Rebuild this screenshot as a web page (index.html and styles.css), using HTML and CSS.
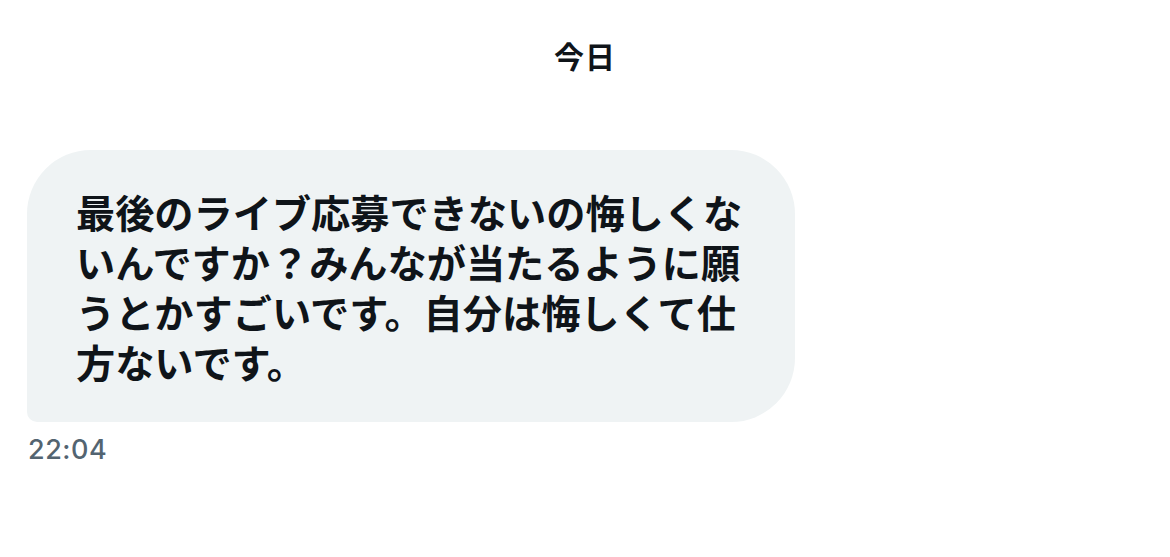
FILE: index.html
```html
<!DOCTYPE html>
<html lang="ja">
<head>
<meta charset="utf-8">
<link rel="stylesheet" href="styles.css">
</head>
<body>
<main class="chat">
  <div class="date">今日</div>
  <div class="message">
    <div class="bubble">最後のライブ応募できないの悔しくないんですか？みんなが当たるように願うとかすごいです。自分は悔しくて仕方ないです。</div>
    <div class="time">22:04</div>
  </div>
</main>
</body>
</html>
```
FILE: styles.css
```css
html, body {
  margin: 0;
  padding: 0;
  background: #ffffff;
}
body {
  width: 1170px;
  height: 557px;
  overflow: hidden;
  font-family: "Noto Sans CJK JP", "Noto Sans", sans-serif;
  color: #0f1419;
}
.chat {
  display: flex;
  flex-direction: column;
  padding: 35px 0 0 27px;
}
.date {
  align-self: center;
  margin-left: -27px;
  font-size: 30px;
  font-weight: 700;
  line-height: 40px;
  letter-spacing: 1px;
}
.message {
  display: flex;
  flex-direction: column;
  align-items: flex-start;
  margin-top: 75px;
}
.bubble {
  box-sizing: border-box;
  width: 768px;
  height: 272px;
  padding: 36px 47px 0 49px;
  background: #eff3f4;
  border-radius: 64px 64px 64px 10px;
  font-size: 39.2px;
  font-weight: 700;
  line-height: 50px;
  word-break: break-all;
}
.time {
  margin-top: 13px;
  margin-left: 1px;
  font-family: "Inter", "Noto Sans", sans-serif;
  font-size: 27px;
  font-weight: 500;
  line-height: 30px;
  color: #536471;
  letter-spacing: 0.5px;
}
```
